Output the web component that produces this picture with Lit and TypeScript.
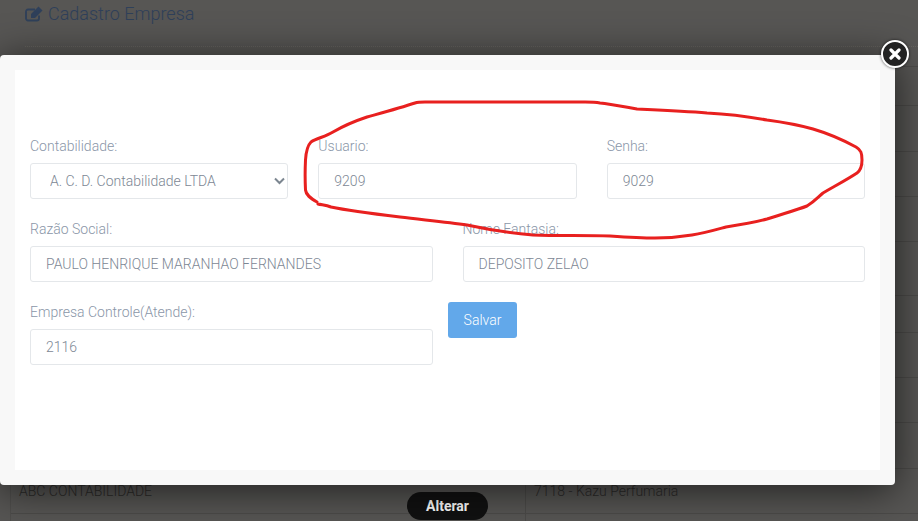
import { LitElement, html, css, svg } from "lit";
import { customElement } from "lit/decorators.js";

const SCRIBBLE =
  "M318 204 C322 205 326 205 331 207 C350 211 375 214 400 217 C425 220 447 222 467 225 C490 230 510 233 533 235 C560 236 585 235 610 236 C625 237 640 238 655 238 C670 238 680 237 692 235 C705 233 715 230 726 227 C745 224 756 222 767 219 C782 214 797 210 807 206 C815 201 818 197 823 193 C835 186 848 179 857 173 C861 170 862 166 862 160 C862 153 861 150 856 147 C845 141 830 134 813 129 C795 124 782 122 767 120 C745 116 727 114 707 113 C685 111 660 110 637 109 C620 106 610 104 600 103 C595 102 590 102 585 102 L500 102 L425 102 C420 102 418 102 415 103 C400 108 385 112 367 117 C355 121 345 125 333 132 C325 137 317 138 311 142 C307 146 306 152 305.500 160 C305 170 305 180 305.500 190 C306 195 310 198 317 202";

const ROW_HEIGHTS = [39, 46, 45, 45, 54, 37, 45, 45, 46, 45, 45];

@customElement("app-root")
export class AppRoot extends LitElement {
  static styles = css`
    :host {
      display: block;
      position: relative;
      width: 918px;
      height: 521px;
      overflow: hidden;
      background: #575654;
      font-family: Roboto, "Liberation Sans", sans-serif;
      font-weight: 300;
    }
    .page {
      display: flex;
      flex-direction: column;
      height: 100%;
    }
    .title {
      display: flex;
      align-items: center;
      gap: 4px;
      height: 47px;
      box-sizing: border-box;
      margin: 0 0 0 25px;
      padding-bottom: 19px;
      border-bottom: 1px dotted #66645f;
      font-size: 18px;
      font-weight: 300;
      color: #2f405a;
      flex: none;
    }
    .title svg {
      width: 19px;
      height: 16px;
      flex: none;
    }
    .table {
      margin: 19px 0 0 10px;
      display: flex;
      flex-direction: column;
      flex: none;
      border-left: 1px solid #4f4e4c;
    }
    .tr {
      display: grid;
      grid-template-columns: 514px 1fr;
      box-sizing: border-box;
      border-top: 1px solid #4c4b49;
      font-size: 14px;
      color: #2c2b2a;
      align-items: stretch;
    }
    .tr span {
      padding-left: 8px;
      display: flex;
      align-items: center;
    }
    .tr span + span {
      border-left: 1px solid #4c4b49;
    }
    .overlay-btn {
      position: absolute;
      left: 407px;
      top: 492px;
      width: 81px;
      height: 28px;
      border: none;
      border-radius: 14px;
      background: #111;
      color: #fff;
      font: 700 14px Roboto, "Liberation Sans", sans-serif;
      padding: 0;
    }
    .modal {
      position: absolute;
      left: 0;
      top: 55px;
      width: 895px;
      height: 430px;
      box-sizing: border-box;
      padding: 15px;
      background: #f8f8f8;
      border-radius: 4px;
      box-shadow: 0 5px 40px rgba(0, 0, 0, 0.65);
    }
    .body {
      height: 400px;
      box-sizing: border-box;
      background: #fff;
      padding: 66px 15px 0;
      display: flex;
      flex-direction: column;
      gap: 20px;
    }
    .row {
      display: flex;
      gap: 30px;
    }
    .field {
      display: flex;
      flex-direction: column;
      flex: 1 1 0;
      min-width: 0;
    }
    label {
      font-size: 14px;
      line-height: 20px;
      height: 27px;
      color: #8a96a8;
      font-weight: 300;
    }
    input,
    select {
      box-sizing: border-box;
      width: 100%;
      height: 36px;
      border: 1px solid #e4e7ea;
      border-radius: 3px;
      padding: 6px 15px;
      background: #fff;
      font: 300 14px Roboto, "Liberation Sans", sans-serif;
      color: #7d8794;
      outline: none;
    }
    select {
      appearance: none;
      padding-left: 19px;
    }
    .select-wrap {
      position: relative;
      display: block;
    }
    .chevron {
      position: absolute;
      left: 244px;
      top: 14px;
      width: 11px;
      height: 8px;
      pointer-events: none;
    }
    .row3 {
      gap: 15px;
    }
    .row3 .field {
      flex: 0 0 403px;
    }
    .save {
      align-self: flex-start;
      width: 69px;
      height: 36px;
      border: none;
      border-radius: 3px;
      background: #62a8ea;
      color: #fff;
      font: 300 14px Roboto, "Liberation Sans", sans-serif;
      padding: 0;
    }
    .close {
      position: absolute;
      left: 881px;
      top: 40px;
      width: 28px;
      height: 28px;
      box-sizing: border-box;
      border-radius: 50%;
      background: #222;
      border: 2px solid #fff;
      box-shadow: 0 0 3px rgba(0, 0, 0, 0.7);
      display: flex;
      align-items: center;
      justify-content: center;
      padding: 0;
    }
    .close svg {
      width: 12px;
      height: 12px;
    }
    .scribble {
      position: absolute;
      left: 0;
      top: 0;
      width: 918px;
      height: 521px;
      pointer-events: none;
    }
  `;

  render() {
    const last = ROW_HEIGHTS.length - 2;
    return html`
      <div class="page">
        <h1 class="title">
          <svg viewBox="0 0 19 16" fill="none">
            <path d="M14 9.500v3a2 2 0 0 1-2 2H3a2 2 0 0 1-2-2V5.500a2 2 0 0 1 2-2h7" stroke="#2f405a" stroke-width="1.800" />
            <path d="M6 8 13.500.5l4 4L10 12H6z" fill="#2f405a" />
          </svg>
          Cadastro Empresa
        </h1>
        <div class="table">
          ${ROW_HEIGHTS.map(
            (h, i) => html`<div class="tr" style="height:${h}px">
              <span>${i === last ? "ABC CONTABILIDADE" : ""}</span>
              <span>${i === last ? "7118 - Kazu Perfumaria" : ""}</span>
            </div>`
          )}
        </div>
      </div>
      <button class="overlay-btn">Alterar</button>
      <div class="modal">
        <div class="body">
          <div class="row">
            <div class="field"><label>Contabilidade:</label>
              <div class="select-wrap">
                <select><option>A. C. D. Contabilidade LTDA</option></select>
                <svg class="chevron" viewBox="0 0 11 8" fill="none"><path d="M1 1.500l4.500 4.500L10 1.500" stroke="#7c8690" stroke-width="2" /></svg>
              </div>
            </div>
            <div class="field"><label>Usuario:</label><input value="9209" /></div>
            <div class="field"><label>Senha:</label><input value="9029" /></div>
          </div>
          <div class="row">
            <div class="field"><label>Razão Social:</label><input value="PAULO HENRIQUE MARANHAO FERNANDES" /></div>
            <div class="field"><label>Nome Fantasia:</label><input value="DEPOSITO ZELAO" /></div>
          </div>
          <div class="row row3">
            <div class="field"><label>Empresa Controle(Atende):</label><input value="2116" /></div>
            <button class="save">Salvar</button>
          </div>
        </div>
      </div>
      <button class="close" aria-label="Fechar">
        <svg viewBox="0 0 12 12"><path d="M2 2l8 8M10 2l-8 8" stroke="#fff" stroke-width="3.200" stroke-linecap="round" /></svg>
      </button>
      <svg class="scribble" viewBox="0 0 918 521" fill="none">
        ${svg`<path d=${SCRIBBLE} stroke="#e8201f" stroke-width="3" stroke-linejoin="round" stroke-linecap="round" />`}
      </svg>
    `;
  }
}
